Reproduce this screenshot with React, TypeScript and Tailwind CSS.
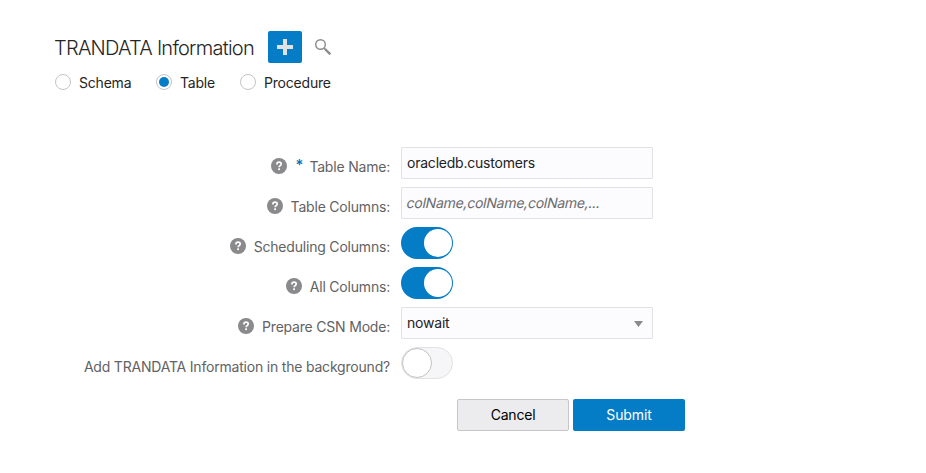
import React from "react";

function Radio({ label, checked = false, className = "" }: { label: string; checked?: boolean; className?: string }) {
  return (
    <label className={`flex h-4 items-center ${className}`}>
      <span className="flex size-4 items-center justify-center rounded-full border border-[#c4c4c6] bg-white">
        {checked && <span className="size-[10px] rounded-full bg-[#057cc6]" />}
      </span>
      <span className="ml-2 whitespace-nowrap pt-[2px] leading-4">{label}</span>
    </label>
  );
}

function HelpIcon() {
  return (
    <svg className="size-4 shrink-0" viewBox="0 0 16 16" fill="none">
      <circle cx="8" cy="8" r="8" fill="#8a8a8d" />
      <path d="M5.9 6.4C5.9 5 6.8 4.2 8.05 4.2c1.3 0 2.15.75 2.15 1.85 0 1.6-2.05 1.6-2.05 3.1" stroke="#fff" strokeWidth="1.7" />
      <rect x="7.2" y="10.3" width="1.8" height="1.8" fill="#fff" />
    </svg>
  );
}

interface RowProps {
  label: string;
  help?: boolean;
  required?: boolean;
  children: React.ReactNode;
}

function Row({ label, help = true, required = false, children }: RowProps) {
  return (
    <div className="flex h-8">
      <div className="flex w-[390px] items-center justify-end pt-[6px] text-[#626264]">
        {help && <HelpIcon />}
        {required && <span className="ml-2 h-5 w-[6px] text-[15px] font-medium leading-[18px] text-[#0572b5]">*</span>}
        <span className="ml-2 whitespace-nowrap pt-[2px] leading-4">{label}</span>
      </div>
      <div className="ml-[11px]">{children}</div>
    </div>
  );
}

function Toggle({ on }: { on: boolean }) {
  return on ? (
    <span className="flex h-8 w-[52px] items-center justify-end rounded-full bg-[#057cc6] pr-px">
      <span className="size-7 rounded-full bg-white" />
    </span>
  ) : (
    <span className="flex h-8 w-[52px] items-center rounded-full border border-[#e2e2e4] bg-[#f6f6f8]">
      <span className="size-[30px] rounded-full border border-[#c2c2c4] bg-white" />
    </span>
  );
}

const field = "block h-8 w-[252px] rounded-[1px] border border-[#e1e2e5] bg-[#fcfcfe] px-[5px] pb-[2px] text-[14px] text-[#222] outline-none";

export default function App() {
  return (
    <main className="h-[473px] w-[926px] overflow-hidden bg-white font-['Inter','Liberation_Sans',sans-serif] text-[14px] tracking-[-0.2px] text-[#252525]">
      <header className="flex h-[63px] items-end pl-[54px]">
        <h1 className="mr-[14px] w-[200px] whitespace-nowrap text-[20px] font-light leading-[30px] tracking-[-0.76px]">TRANDATA Information</h1>
        <button className="flex h-8 w-[34px] items-center justify-center rounded-[2px] bg-[#057cc6]">
          <svg className="size-4" viewBox="0 0 16 16" fill="none">
            <path d="M8 0v16M0 8h16" stroke="#dfe1e3" strokeWidth="4" />
          </svg>
        </button>
        <svg className="mb-2 ml-[13px] size-4" viewBox="0 0 16 16" fill="none" stroke="#8b8c8f">
          <circle cx="5.5" cy="5.5" r="4.8" strokeWidth="1.4" />
          <path d="m9 9 1.8 1.8" strokeWidth="1.4" />
          <path d="m10 10 5.3 5.3" strokeWidth="2.4" />
        </svg>
      </header>
      <div className="mt-[11px] flex pl-[55px]">
        <Radio label="Schema" className="w-[101px]" />
        <Radio label="Table" checked className="w-[84px]" />
        <Radio label="Procedure" />
      </div>
      <form className="mt-[57px] flex flex-col gap-2" onSubmit={(e) => e.preventDefault()}>
        <Row label="Table Name:" required>
          <input className={`${field} tracking-[-0.22px]`} defaultValue="oracledb.customers" />
        </Row>
        <Row label="Table Columns:">
          <div className={`${field} flex! items-center`}>
            <span className="-skew-x-12 whitespace-nowrap tracking-[-0.25px] text-[#6b6b6d]">colName,colName,colName,...</span>
          </div>
        </Row>
        <Row label="Scheduling Columns:">
          <Toggle on />
        </Row>
        <Row label="All Columns:">
          <Toggle on />
        </Row>
        <Row label="Prepare CSN Mode:">
          <div className={`${field} flex! items-center justify-between`}>
            <span>nowait</span>
            <svg className="mr-1 mt-[3px] h-[6px] w-[9px]" viewBox="0 0 9 6">
              <path d="M0 0h9L4.5 6z" fill="#8a8a8d" />
            </svg>
          </div>
        </Row>
        <Row label="Add TRANDATA Information in the background?" help={false}>
          <Toggle on={false} />
        </Row>
        <div className="mt-3 flex gap-1 pl-[457px]">
          <button className="h-8 w-28 rounded-[2px] border border-[#c6c6c8] bg-[#ececee] pb-[2px] text-black">Cancel</button>
          <button className="h-8 w-28 rounded-[2px] bg-[#057cc6] pb-[2px] tracking-[-0.1px] text-white">Submit</button>
        </div>
      </form>
    </main>
  );
}
